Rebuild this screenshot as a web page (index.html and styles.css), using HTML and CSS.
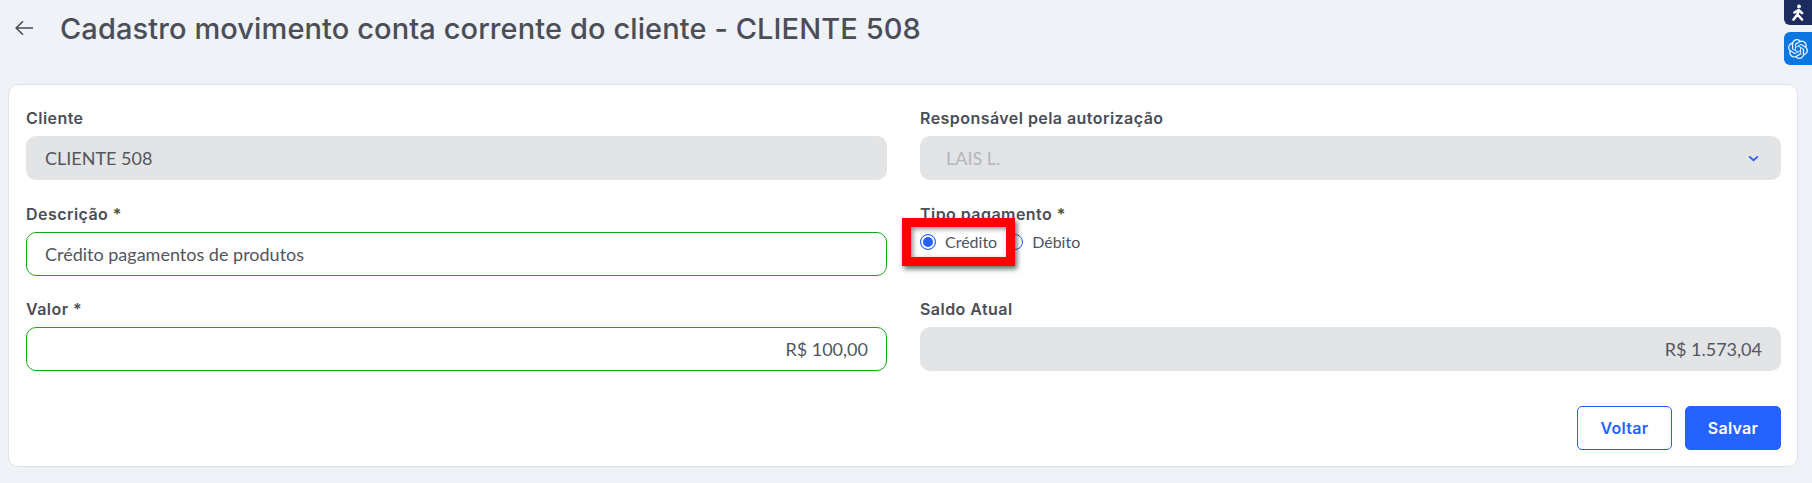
FILE: index.html
```html
<!DOCTYPE html>
<html lang="pt-BR">

<head>
    <meta charset="UTF-8">
    <title>Cadastro movimento conta corrente</title>
    <link rel="stylesheet" href="styles.css">
</head>

<body>
    <!--titulo-->
    <header class="top">
        <svg class="back" viewBox="0 0 18 16" width="18" height="16" fill="none" stroke="#4b4e57" stroke-width="1.6">
            <path d="M18 8H1.5M8 1.2 1.2 8 8 14.8" />
        </svg>
        <h1>Cadastro movimento conta corrente do cliente - CLIENTE 508</h1>
    </header>

    <!--atalhos laterais-->
    <div class="side side-dark">
        <svg viewBox="0 0 14 17" width="14" height="17" fill="none" stroke="#fff" stroke-width="2.6" stroke-linecap="round" stroke-linejoin="round">
            <circle cx="8" cy="2.4" r="1.9" fill="#fff" stroke="none" />
            <path d="M7.5 6 6.5 10.5 2.5 15.5M6.5 10.5 11 15.5M3.5 8.5 7.5 6 11 9" />
        </svg>
    </div>
    <div class="side side-blue">
        <svg viewBox="0 0 24 24" width="20" height="20" fill="#e6f2ff">
            <path d="M22.2819 9.8211a5.9847 5.9847 0 0 0-.5157-4.9108 6.0462 6.0462 0 0 0-6.5098-2.9A6.0651 6.0651 0 0 0 4.9807 4.1818a5.9847 5.9847 0 0 0-3.9977 2.9 6.0462 6.0462 0 0 0 .7427 7.0966 5.98 5.98 0 0 0 .511 4.9107 6.051 6.051 0 0 0 6.5146 2.9001A5.9847 5.9847 0 0 0 13.2599 24a6.0557 6.0557 0 0 0 5.7718-4.2058 5.9894 5.9894 0 0 0 3.9977-2.9001 6.0557 6.0557 0 0 0-.7475-7.0729zm-9.022 12.6081a4.4755 4.4755 0 0 1-2.8764-1.0408l.1419-.0804 4.7783-2.7582a.7948.7948 0 0 0 .3927-.6813v-6.7369l2.02 1.1686a.071.071 0 0 1 .038.052v5.5826a4.504 4.504 0 0 1-4.4945 4.4944zm-9.6607-4.1254a4.4708 4.4708 0 0 1-.5346-3.0137l.142.0852 4.783 2.7582a.7712.7712 0 0 0 .7806 0l5.8428-3.3685v2.3324a.0804.0804 0 0 1-.0332.0615L9.74 19.9502a4.4992 4.4992 0 0 1-6.1408-1.6464zM2.3408 7.8956a4.485 4.485 0 0 1 2.3655-1.9728V11.6a.7664.7664 0 0 0 .3879.6765l5.8144 3.3543-2.0201 1.1685a.0757.0757 0 0 1-.071 0l-4.8303-2.7865A4.504 4.504 0 0 1 2.3408 7.872zm16.5963 3.8558L13.1038 8.364 15.1192 7.2a.0757.0757 0 0 1 .071 0l4.8303 2.7913a4.4944 4.4944 0 0 1-.6765 8.1042v-5.6772a.79.79 0 0 0-.407-.667zm2.0107-3.0231l-.142-.0852-4.7735-2.7818a.7759.7759 0 0 0-.7854 0L9.409 9.2297V6.8974a.0662.0662 0 0 1 .0284-.0615l4.8303-2.7866a4.4992 4.4992 0 0 1 6.6802 4.66zM8.3065 12.863l-2.02-1.1638a.0804.0804 0 0 1-.038-.0567V6.0742a4.4992 4.4992 0 0 1 7.3757-3.4537l-.142.0805L8.704 5.459a.7948.7948 0 0 0-.3927.6813zm1.0976-2.3654l2.602-1.4998 2.6069 1.4998v2.9994l-2.5974 1.4997-2.6067-1.4997Z" />
        </svg>
    </div>

    <main class="card">
        <div class="form">
            <div class="group">
                <label>Cliente</label>
                <div class="field field-off">CLIENTE 508</div>
            </div>
            <div class="group">
                <label>Responsável pela autorização</label>
                <div class="field field-off field-select">
                    <span class="muted">LAIS L.</span>
                    <svg viewBox="0 0 12 8" width="11" height="7" fill="none" stroke="#2563ff" stroke-width="2">
                        <path d="M1 1.5 6 6l5-4.5" />
                    </svg>
                </div>
            </div>
            <div class="group">
                <label>Descrição *</label>
                <div class="field field-ok">Crédito pagamentos de produtos</div>
            </div>
            <div class="group">
                <label>Tipo pagamento *</label>
                <div class="radios">
                    <span class="radio radio-on">Crédito</span>
                    <span class="radio">Débito</span>
                </div>
            </div>
            <div class="group">
                <label>Valor *</label>
                <div class="field field-ok field-money">R$ 100,00</div>
            </div>
            <div class="group">
                <label>Saldo Atual</label>
                <div class="field field-off field-money">R$ 1.573,04</div>
            </div>
        </div>
        <div class="actions">
            <button class="btn btn-line">Voltar</button>
            <button class="btn btn-full">Salvar</button>
        </div>
    </main>

    <!--marcacao vermelha por cima do radio-->
    <div class="mark"></div>
</body>

</html>
```

FILE: styles.css
```css
* {
    margin: 0;
    padding: 0;
    box-sizing: border-box;
}

body {
    height: 483px;
    padding: 0 14px 16px 8px;
    background-color: #eff2f7;
    font-family: "Lato", "Liberation Sans", sans-serif;
    color: #4b4e57;
    overflow: hidden;
    position: relative;
}

.top {
    height: 84px;
    padding: 0 0 28px 7px;
    display: flex;
    align-items: center;
    gap: 27px;
}

.top h1 {
    font-family: "Inter", sans-serif;
    font-size: 29px;
    font-weight: 500;
    letter-spacing: 0.1px;
    color: #4b4e57;
    white-space: nowrap;
}

.side {
    position: absolute;
    right: 0;
    width: 28px;
    display: flex;
    align-items: center;
    justify-content: center;
    border-radius: 6px 0 0 6px;
}

.side-dark {
    top: -8px;
    height: 33px;
    padding-top: 8px;
    background-color: #1c2c5e;
}

.side-blue {
    top: 32px;
    height: 33px;
    background-color: #0b76e0;
}

.card {
    height: 383px;
    padding: 26px 16px 16px 17px;
    background-color: #fff;
    border: 1px solid #dfe2e8;
    border-radius: 10px;
    display: flex;
    flex-direction: column;
    justify-content: space-between;
}

.form {
    display: grid;
    grid-template-columns: 1fr 1fr;
    column-gap: 33px;
    row-gap: 26.5px;
}

.group label {
    display: block;
    height: 25px;
    line-height: 14px;
    font-family: "Inter", sans-serif;
    font-size: 16px;
    font-weight: 600;
    letter-spacing: 0.45px;
    color: #4b4e57;
}

.field {
    height: 44px;
    padding: 0 19px;
    display: flex;
    align-items: center;
    border-radius: 10px;
    font-size: 18px;
    color: #53565f;
}

.field-off {
    background-color: #e3e4e6;
}

.field-ok {
    padding: 0 18px;
    background-color: #fff;
    border: 1px solid #16a916;
}

.field-select {
    justify-content: space-between;
    padding-left: 26px;
    padding-right: 22px;
}

.field-money {
    justify-content: flex-end;
}

.muted {
    color: #b4b6bb;
}

.radios {
    display: flex;
    gap: 10px;
}

.radio {
    display: flex;
    align-items: center;
    height: 20px;
    gap: 9px;
    font-size: 16px;
    color: #4f5360;
}

.radio::before {
    content: "";
    width: 14px;
    height: 14px;
    border: 1.5px solid #2563ff;
    border-radius: 50%;
    background-color: #fff;
}

.radio-on::before {
    background-color: #2563ff;
    box-shadow: inset 0 0 0 2px #fff;
}

.actions {
    display: flex;
    justify-content: flex-end;
    gap: 13px;
}

.btn {
    width: 96px;
    height: 44px;
    border-radius: 5px;
    font-family: "Inter", sans-serif;
    font-size: 16px;
    font-weight: 600;
    letter-spacing: 0.3px;
    cursor: pointer;
}

.btn-line {
    width: 95px;
    background-color: #fff;
    border: 1px solid #2563ff;
    color: #2563ff;
}

.btn-full {
    background-color: #2563ff;
    border: 1px solid #2563ff;
    color: #fff;
}

.mark {
    position: absolute;
    left: 902px;
    top: 218px;
    width: 113px;
    height: 48px;
    border: 9px solid #f00;
    box-shadow: 2px 3px 5px rgba(0, 0, 0, 0.6), inset 2px 2px 5px rgba(0, 0, 0, 0.45);
}
```
